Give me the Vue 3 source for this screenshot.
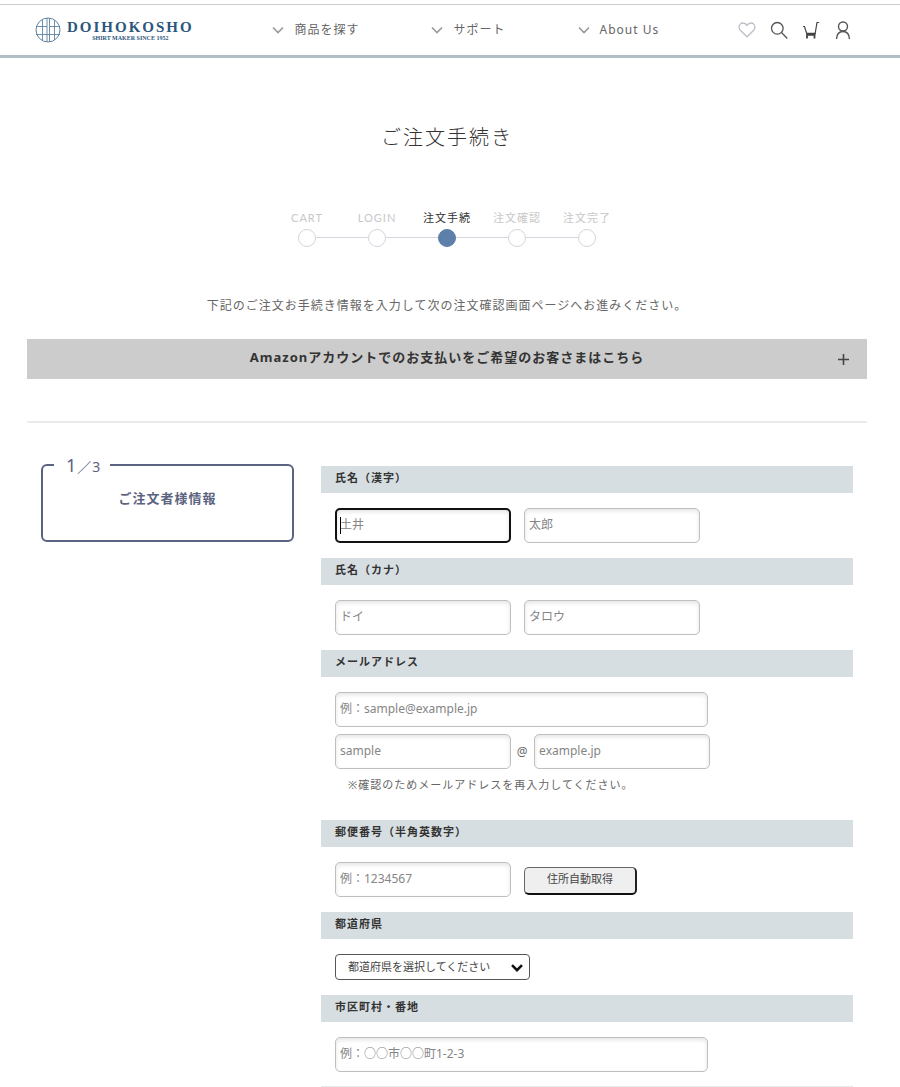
<script setup>
import { ref } from 'vue'

const menu = ['商品を探す', 'サポート', 'About Us']
const steps = ['CART', 'LOGIN', '注文手続', '注文確認', '注文完了']
const currentStep = 2

const form = ref({
  familyName: '', givenName: '', familyKana: '', givenKana: '',
  email: '', emailLocal: '', emailDomain: '', zip: '', prefecture: '', address: ''
})
</script>

<template>
  <div class="page">
    <header class="header">
      <a class="logo" href="#" aria-label="DOIHOKOSHO">
        <svg class="emblem" viewBox="0 0 26 26" aria-hidden="true">
          <g fill="none" stroke="#5f82a2">
            <circle cx="13" cy="13" r="12" />
            <path d="M7.500 2.500v21M12 1v24M14.500 1v24M19.500 3v20M1 9.500h11M14.500 9.500H25M1 17.500h24" stroke-width="0.900" />
          </g>
        </svg>
        <span class="brand">
          <span class="brand-name">DOIHOKOSHO</span>
          <span class="brand-tag">SHIRT MAKER SINCE 1952</span>
        </span>
      </a>
      <nav class="menu">
        <a v-for="item in menu" :key="item" href="#">
          <svg viewBox="0 0 12 8" aria-hidden="true"><path d="M1 1.500l5 5 5-5" fill="none" stroke="#999" stroke-width="1.600" /></svg>
          <span>{{ item }}</span>
        </a>
      </nav>
      <div class="tools">
        <a href="#" aria-label="お気に入り">
          <svg viewBox="0 0 18 18"><path d="M9 15.800L2.300 9.200C0.600 7.400 0.700 4.600 2.300 3.100C4.200 1.300 7.200 1.700 9 4.400C10.800 1.700 13.800 1.300 15.700 3.100C17.300 4.600 17.400 7.400 15.700 9.200Z" fill="none" stroke="#b9bec6" stroke-width="1.300" /></svg>
        </a>
        <a href="#" aria-label="検索">
          <svg viewBox="0 0 18 18"><g fill="none" stroke="#555" stroke-width="1.300"><circle cx="7.300" cy="7.300" r="5.800" /><path d="M11.500 11.500l5.800 6" /></g></svg>
        </a>
        <a href="#" aria-label="カート">
          <svg viewBox="0 0 18 18"><g fill="none" stroke="#444" stroke-width="1.200"><path d="M1 5.500h1.500l2.500 8h8L15 1.500h2" /><path d="M4.500 12.500h9M4.500 14h8.500" stroke-width="1.600" /><path d="M5 14v3.500M12.500 14v3.500" stroke-width="1.800" /></g></svg>
        </a>
        <a href="#" aria-label="マイページ">
          <svg viewBox="0 0 18 18"><g fill="none" stroke="#555" stroke-width="1.400"><circle cx="9" cy="5.500" r="4.500" /><path d="M2.500 18c.300-4.800 2.700-7.500 6.500-7.500s6.200 2.700 6.500 7.500" /></g></svg>
        </a>
      </div>
    </header>

    <main class="main">
      <h1>ご注文手続き</h1>

      <ol class="steps">
        <li v-for="(step, i) in steps" :key="step" :class="{ current: i === currentStep }">
          <span>{{ step }}</span>
          <i class="dot"></i>
        </li>
      </ol>

      <p class="lead">下記のご注文お手続き情報を入力して次の注文確認画面ページへお進みください。</p>

      <button class="amazon" type="button">
        <span>Amazonアカウントでのお支払いをご希望のお客さまはこちら</span>
        <svg viewBox="0 0 11 11" aria-hidden="true"><path d="M5.500 0v11M0 5.500h11" stroke="#444" stroke-width="1.600" /></svg>
      </button>

      <div class="columns">
        <aside>
          <div class="stage">
            <p class="stage-count"><span>1</span>／3</p>
            <h2>ご注文者様情報</h2>
          </div>
        </aside>

        <form class="form" @submit.prevent>
          <section>
            <h3>氏名（漢字）</h3>
            <div class="row">
              <span class="focused">
                <input v-model="form.familyName" type="text" aria-label="姓（漢字）" placeholder="土井">
              </span>
              <input v-model="form.givenName" type="text" aria-label="名（漢字）" placeholder="太郎">
            </div>
          </section>
          <section>
            <h3>氏名（カナ）</h3>
            <div class="row">
              <input v-model="form.familyKana" type="text" aria-label="姓（カナ）" placeholder="ドイ">
              <input v-model="form.givenKana" type="text" aria-label="名（カナ）" placeholder="タロウ">
            </div>
          </section>
          <section>
            <h3><label for="email">メールアドレス</label></h3>
            <div class="row stacked">
              <input id="email" v-model="form.email" class="wide" type="text" placeholder="例：sample@example.jp">
              <div class="split">
                <input v-model="form.emailLocal" type="text" aria-label="確認用メールアドレス" placeholder="sample">
                <span class="at">@</span>
                <input v-model="form.emailDomain" type="text" aria-label="確認用ドメイン" placeholder="example.jp">
              </div>
              <p class="note">※確認のためメールアドレスを再入力してください。</p>
            </div>
          </section>
          <section>
            <h3><label for="zip">郵便番号（半角英数字）</label></h3>
            <div class="row">
              <input id="zip" v-model="form.zip" type="text" placeholder="例：1234567">
              <button class="lookup" type="button">住所自動取得</button>
            </div>
          </section>
          <section>
            <h3><label for="pref">都道府県</label></h3>
            <div class="row">
              <span class="select">
                <select id="pref" v-model="form.prefecture">
                  <option value="">都道府県を選択してください</option>
                  <option>広島県</option>
                </select>
                <svg viewBox="0 0 12 8" aria-hidden="true"><path d="M1 1.200l5 5 5-5" fill="none" stroke="#111" stroke-width="2.600" /></svg>
              </span>
            </div>
          </section>
          <section>
            <h3><label for="address">市区町村・番地</label></h3>
            <div class="row">
              <input id="address" v-model="form.address" class="wide" type="text" placeholder="例：○○市○○町1-2-3">
            </div>
          </section>
        </form>
      </div>
    </main>
  </div>
</template>

<style>
body {
  background: #fff;
}
</style>

<style scoped>
.page {
  color: #666;
  font-family: "Noto Sans", "Noto Sans CJK JP", sans-serif;
  font-size: 12px;
  line-height: 18px;
  letter-spacing: 1px;
  padding-top: 4px;
}
.page * {
  box-sizing: border-box;
}
h1, h2, h3, p, ol {
  margin: 0;
  padding: 0;
}
a {
  color: inherit;
  text-decoration: none;
}

.header {
  display: flex;
  align-items: center;
  justify-content: space-between;
  height: 54px;
  padding: 0 48px 0 35px;
  border-top: 1px solid #ccc;
  border-bottom: 3px solid #afbfc4;
}
.logo {
  display: flex;
  align-items: center;
  gap: 6px;
  color: #2b567d;
}
.emblem {
  width: 26px;
  height: 26px;
}
.brand {
  display: flex;
  flex-direction: column;
  align-items: center;
  font-family: "Liberation Serif", serif;
}
.brand-name {
  font-size: 15px;
  font-weight: bold;
  line-height: 16px;
  letter-spacing: 2px;
}
.brand-tag {
  font-size: 6px;
  font-weight: bold;
  line-height: 6px;
  letter-spacing: 0;
}
.menu {
  display: flex;
  gap: 72px;
}
.menu a {
  display: flex;
  align-items: center;
  gap: 10px;
  font-size: 12px;
}
.menu svg {
  width: 12px;
  height: 8px;
}
.tools {
  display: flex;
  gap: 14px;
}
.tools svg {
  display: block;
  width: 18px;
  height: 18px;
}

.main {
  padding: 0 33px 0 27px;
}
h1 {
  margin-top: 64px;
  color: #333;
  font-size: 20px;
  font-weight: 300;
  font-family: "Noto Sans CJK JP", sans-serif;
  line-height: 30px;
  letter-spacing: 2px;
  text-align: center;
}
.steps {
  display: grid;
  grid-template-columns: repeat(5, 70px);
  justify-content: center;
  margin-top: 57px;
  list-style: none;
  color: #c8c8c8;
  font-family: Lato, "Noto Sans CJK JP", sans-serif;
  font-size: 11px;
  line-height: 18px;
}
.steps li {
  position: relative;
  display: flex;
  flex-direction: column;
  align-items: center;
  gap: 2px;
}
.steps li + li::before {
  content: "";
  position: absolute;
  right: 50%;
  bottom: 9px;
  width: 100%;
  height: 1px;
  background: #d5d5de;
}
.dot {
  position: relative;
  z-index: 1;
  width: 18px;
  height: 18px;
  border: 1px solid #d5d5de;
  border-radius: 50%;
  background: #fff;
}
.current {
  color: #333;
}
.current .dot {
  border-color: #5d7fa9;
  background: #5d7fa9;
}
.lead {
  margin-top: 50px;
  text-align: center;
}
.amazon {
  display: flex;
  align-items: center;
  width: 100%;
  height: 40px;
  margin-top: 24px;
  padding: 0 18px 0 29px;
  border: 0;
  background: #ccc;
  color: #333;
  font: bold 13px/20px "Noto Sans", "Noto Sans CJK JP", sans-serif;
  letter-spacing: 1px;
}
.amazon span {
  flex: 1;
  padding-bottom: 4px;
}
.amazon svg {
  width: 11px;
  height: 11px;
}

.columns {
  display: grid;
  grid-template-columns: 253fr 532fr;
  gap: 27px;
  align-items: start;
  margin-top: 42px;
  padding: 41px 14px 0;
  border-top: 2px solid #ebebeb;
}
.stage {
  position: relative;
  height: 78px;
  border: 2px solid #5b6380;
  border-radius: 6px;
  color: #5b6380;
}
.stage h2 {
  padding-top: 22px;
  font-size: 13px;
  line-height: 20px;
  text-align: center;
}
.stage-count {
  position: absolute;
  top: -13px;
  left: 11px;
  padding: 0 9px 0 12px;
  background: #fff;
  font-size: 14px;
  line-height: 24px;
}
.stage-count span {
  font-size: 18px;
}

.form {
  margin-top: 2px;
  border-bottom: 1px solid #e5eaeb;
}
h3 {
  height: 27px;
  padding: 3px 14px;
  background: #d7dee1;
  color: #333;
  font-size: 11px;
  line-height: 18px;
}
.row {
  display: flex;
  align-items: center;
  gap: 13px;
  padding: 15px 0 15px 14px;
}
section:last-child .row {
  padding-bottom: 14px;
}
input {
  width: 34%;
  height: 35px;
  margin: 0;
  padding: 0 4px 3px;
  border: 1px solid #bfbfbf;
  border-radius: 5px;
  background: #fff;
  box-shadow: inset 0 2px 4px #e4e4e4;
  color: #333;
  font: 12px/18px "Noto Sans", "Noto Sans CJK JP", sans-serif;
  outline: 0;
}
input::placeholder {
  color: #858585;
  opacity: 1;
}
.wide {
  width: 72%;
}
.focused {
  position: relative;
  width: 34%;
}
.focused input {
  display: block;
  width: 100%;
  padding: 0 3px 3px;
  border: 2px solid #111;
}
.focused::after {
  content: "";
  position: absolute;
  top: 9px;
  left: 5px;
  width: 1px;
  height: 17px;
  background: #000;
}
.stacked {
  flex-direction: column;
  align-items: flex-start;
  gap: 7px;
  padding-bottom: 26px;
}
.split {
  display: flex;
  align-items: center;
  width: 100%;
}
.at {
  width: 23px;
  text-align: center;
}
.note {
  padding-left: 13px;
  font-size: 11px;
}
.lookup {
  height: 28px;
  margin-top: 2px;
  padding: 0 22px 3px;
  border: solid;
  border-width: 1px 2px 2px 1px;
  border-color: #666 #222 #111 #666;
  border-radius: 5px;
  background: #efefef;
  color: #444;
  font: 11px/18px "Noto Sans", "Noto Sans CJK JP", sans-serif;
}
.select {
  position: relative;
}
select {
  display: block;
  height: 26px;
  padding: 0 38px 0 12px;
  border: 1px solid #555;
  border-radius: 4px;
  background: #fff;
  color: #444;
  font: 11px/18px "Noto Sans", "Noto Sans CJK JP", sans-serif;
  appearance: none;
}
.select svg {
  position: absolute;
  top: 10px;
  right: 7px;
  width: 12px;
  height: 8px;
  pointer-events: none;
}
</style>
